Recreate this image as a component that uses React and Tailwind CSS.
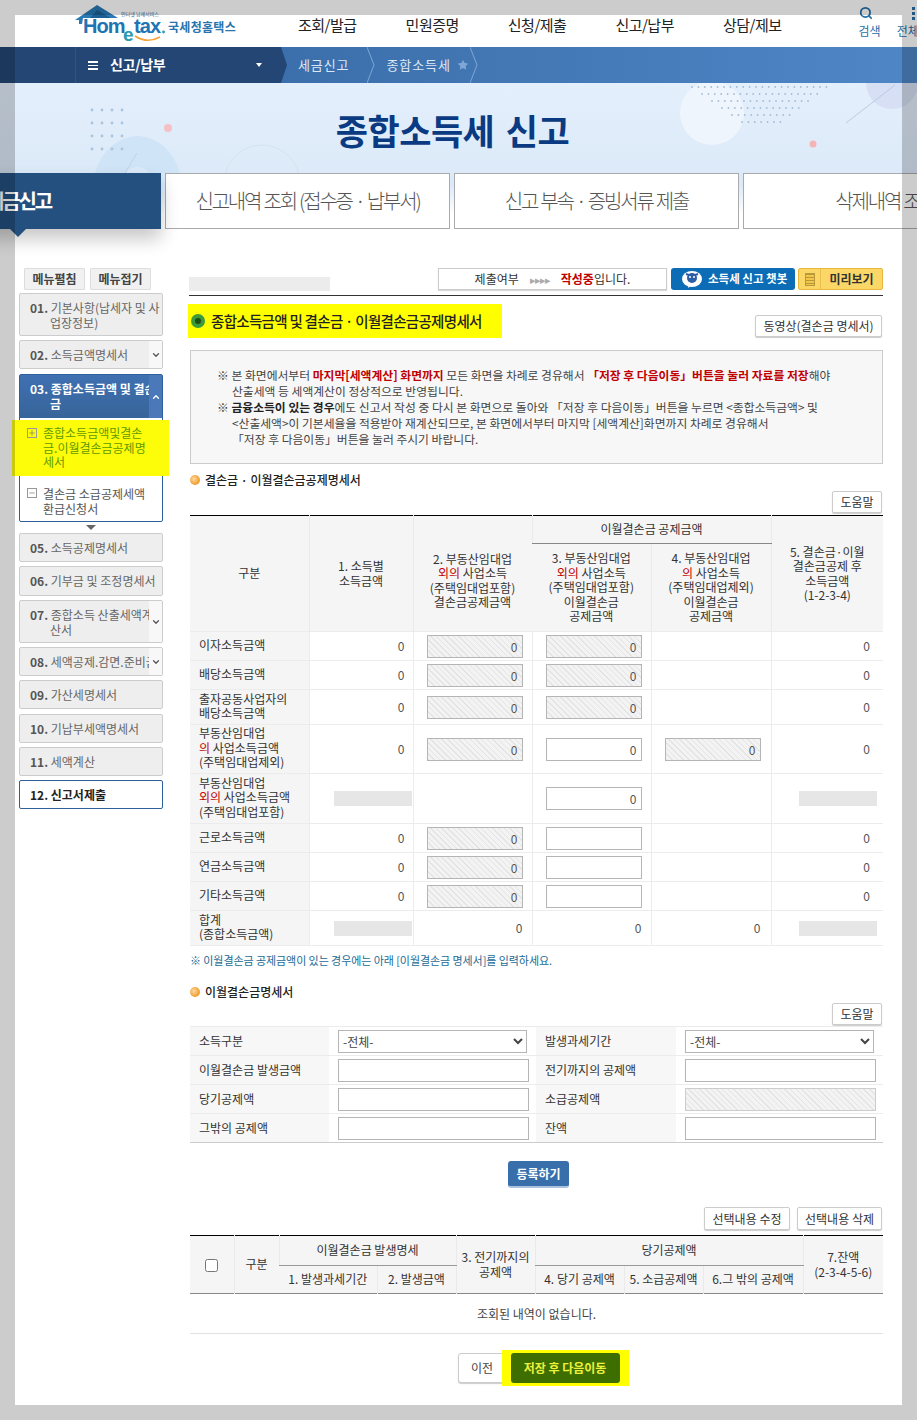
import { ChevronDown, ChevronUp, Search, Star, Plus, Minus } from "lucide-react";

const hatch =
  "bg-[repeating-linear-gradient(45deg,#e4e4e4_0,#e4e4e4_1px,#f3f3f3_1px,#f3f3f3_4px)]";

const Logo = () => (
  <svg width="170" height="47" viewBox="0 0 170 47" className="shrink-0">
    <path d="M0 20 L22 5 L43 18 L34 18 L8 18 L7 24 L4 24 L4 20 Z" fill="#2a7ab5" />
    <path d="M15 18 L22 10 L36 18 Z" fill="#1c5f96" />
    <text x="46" y="15.5" fontSize="5" fill="#2a6a9c" fontFamily="Noto Sans CJK KR">
      인터넷 납세서비스
    </text>
    <text x="8" y="33" fontSize="20" fontWeight="700" fill="#1f74b3" fontFamily="Liberation Sans" letterSpacing="-0.9">
      Hom
    </text>
    <text x="48" y="41" fontSize="19" fill="#2a9ab0" fontFamily="Liberation Sans" fontWeight="700">
      e
    </text>
    <text x="59" y="33" fontSize="20" fontWeight="700" fill="#1f74b3" fontFamily="Liberation Sans" letterSpacing="-0.9">
      tax
    </text>
    <circle cx="88.5" cy="32" r="1.4" fill="#2a9ab0" />
    <path d="M60 36 Q72 44 85 37" stroke="#f2a43a" strokeWidth="1.6" fill="none" />
    <text x="93" y="32" fontSize="12" fontWeight="700" fill="#2a74ad" fontFamily="Noto Sans CJK KR" letterSpacing="0.3">
      국세청홈택스
    </text>
  </svg>
);

const Crumb = () => (
  <svg width="8" height="36" viewBox="0 0 8 36" className="shrink-0">
    <path d="M0 0 L7 18 L0 36" stroke="#7ea6d6" fill="none" />
  </svg>
);

const BannerArt = () => (
  <svg width="917" height="146" viewBox="0 0 917 146" className="absolute top-0 left-0">
    <path d="M95 90 A45 55 0 0 1 180 90 L150 90 A18 22 0 0 0 125 90 Z" fill="#cfe4f6" />
    <circle cx="262" cy="100" r="38" fill="none" stroke="#d5e2f0" />
    <path d="M110 115 L137 70" stroke="#c3d3e6" />
    {[0, 1, 2, 3].flatMap((r) =>
      [0, 1, 2, 3].map((c) => <circle key={`${r}${c}`} cx={92 + c * 10} cy={27 + r * 13} r="1.4" fill="#a9c4df" />)
    )}
    <circle cx="168" cy="45" r="4" fill="#f5c0c5" />
    <circle cx="712" cy="30" r="32" fill="#eef5fc" />
    {[0, 1, 2, 3, 4, 5].flatMap((r) =>
      Array.from({ length: 22 - r * 3 }).map((_, c) => (
        <circle key={`d${r}-${c}`} cx={692 + r * 10 + c * 6.4} cy={4 + r * 7} r="0.9" fill="#a6bcd4" />
      ))
    )}
    <circle cx="813" cy="61" r="3.5" fill="#f5b5b5" />
    <circle cx="892" cy="0" r="26" fill="#d6dff3" />
    <path d="M846 40 L895 2" stroke="#b9cbe2" />
  </svg>
);

const Btn = ({ className = "", children }) => (
  <button className={`border border-[#ccc] bg-white text-[12px] text-[#333] rounded-[2px] shadow-[0_1px_1px_rgba(0,0,0,0.2)] whitespace-nowrap h-[22px] ${className}`}>
    {children}
  </button>
);

const SideItem = ({ lines, active, toggle, h = 29 }) => (
  <div
    className={`w-[144px] flex border rounded-[2px] overflow-hidden shrink-0 ${
      active ? "border-[#2f6099] bg-white" : "border-[#ccc] bg-[#eee]"
    }`}
    style={{ height: h }}
  >
    <div className={`flex-1 min-w-0 overflow-hidden pl-[10px] pt-[6px] text-[12px] leading-[15px] whitespace-nowrap ${active ? "text-[#222]" : "text-[#666]"}`}>
      {lines.map((l, i) =>
        i === 0 ? (
          <div key={i}>
            <b className={active ? "text-[#222]" : "text-[#555]"}>{l[0]}</b> {l[1]}
          </div>
        ) : (
          <div key={i} className="pl-[20px]">{l}</div>
        )
      )}
    </div>
    {toggle && (
      <div className="w-[13px] shrink-0 bg-[#f8f8f8] flex items-center justify-center">
        <ChevronDown size={10} strokeWidth={3} className="text-[#555]" />
      </div>
    )}
  </div>
);

const Sidebar = () => (
  <div className="w-[144px] ml-[19px] shrink-0 flex flex-col">
    <div className="flex gap-[5px] ml-[5px] h-[22px]">
      {["메뉴펼침", "메뉴접기"].map((t) => (
        <button key={t} className="w-[61px] h-[22px] bg-[#f1f1f1] border border-[#ddd] text-[12px] font-bold text-[#444] rounded-[1px]">
          {t}
        </button>
      ))}
    </div>
    <div className="mt-[3px] flex flex-col">
      <SideItem h={43} lines={[["01.", "기본사항(납세자 및 사"], "업장정보)"]} />
      <div className="h-[4px]" />
      <SideItem lines={[["02.", "소득금액명세서"]]} toggle />
      <div className="h-[5px]" />
      <div className="border border-[#2f6099] rounded-[2px] bg-white h-[148px]">
        <div className="h-[43px] flex bg-[linear-gradient(#3f70b2,#376499)]">
          <div className="flex-1 min-w-0 overflow-hidden pl-[10px] pt-[6px] text-[12px] leading-[15px] whitespace-nowrap text-white font-bold">
            <div>03. 종합소득금액 및 결손금</div>
            <div className="pl-[20px]">금</div>
          </div>
          <div className="w-[13px] shrink-0 bg-[#4a78b8] flex items-center justify-center">
            <ChevronUp size={10} strokeWidth={3} className="text-white" />
          </div>
        </div>
        <div className="-ml-[8px] -mr-[7px] mt-[2px] h-[56px] bg-[#fdfd0a] flex gap-[6px] pl-[15px] pt-[6px]">
          <span className="mt-[2px] w-[10px] h-[10px] border border-[#999] flex items-center justify-center shrink-0">
            <Plus size={8} strokeWidth={2} className="text-[#777]" />
          </span>
          <div className="text-[12px] leading-[14.5px] text-[#5f9a00] whitespace-nowrap">
            종합소득금액및결손
            <br />
            금.이월결손금공제명
            <br />
            세서
          </div>
        </div>
        <div className="flex gap-[6px] pl-[7px] pt-[10px]">
          <span className="mt-[2px] w-[10px] h-[10px] border border-[#999] flex items-center justify-center shrink-0">
            <Minus size={8} strokeWidth={2} className="text-[#777]" />
          </span>
          <div className="text-[12px] leading-[15px] text-[#555] whitespace-nowrap">
            결손금 소급공제세액
            <br />
            환급신청서
          </div>
        </div>
      </div>
      <div className="h-[11px] flex items-center justify-center">
        <div className="w-0 h-0 border-x-[5px] border-x-transparent border-t-[5px] border-t-[#666]" />
      </div>
      <div className="flex flex-col gap-[4px]">
        <SideItem lines={[["05.", "소득공제명세서"]]} />
        <SideItem h={30} lines={[["06.", "기부금 및 조정명세서"]]} />
        <SideItem h={43} lines={[["07.", "종합소득 산출세액계"], "산서"]} toggle />
        <SideItem lines={[["08.", "세액공제.감면.준비금"]]} toggle />
        <SideItem lines={[["09.", "가산세명세서"]]} />
        <div className="mt-[1px]">
          <SideItem lines={[["10.", "기납부세액명세서"]]} />
        </div>
        <SideItem lines={[["11.", "세액계산"]]} />
        <div className="w-[144px] h-[29px] border border-[#2f6099] rounded-[2px] bg-white pl-[10px] pt-[6px] text-[12px] leading-[15px] text-[#222] font-bold">
          12. 신고서제출
        </div>
      </div>
    </div>
  </div>
);

const Bullet = () => (
  <span className="w-[10px] h-[10px] rounded-full shrink-0 bg-[radial-gradient(circle_at_40%_40%,#ffd9a0,#ee9a2a_70%)]" />
);

const Num = ({ className = "" }) => <span className={`block leading-[14px] text-[12px] text-[#555] ${className}`}>0</span>;

const Box = ({ type }) => {
  if (type === "h")
    return (
      <input
        readOnly
        value="0"
        className={`block ml-auto w-[96px] h-[23px] border border-[#b5b5b5] text-right pr-[4px] text-[12px] text-[#555] ${hatch}`}
      />
    );
  if (type === "0")
    return <input readOnly value="0" className="block ml-auto w-[96px] h-[23px] border border-[#b5b5b5] bg-white text-right pr-[4px] text-[12px] text-[#555]" />;
  if (type === "e") return <input readOnly className="block ml-auto w-[96px] h-[23px] border border-[#b5b5b5] bg-white" />;
  return null;
};

const Red = ({ children }) => <span className="text-[#c00000]">{children}</span>;

const Blank = () => <div className="w-[78px] h-[15px] bg-[#e6e6e6] ml-auto" />;

const rows = [
  { h: 29, label: "이자소득금액", c: ["h", "h", null] },
  { h: 29, label: "배당소득금액", c: ["h", "h", null] },
  { h: 35, label: <>출자공동사업자의<br />배당소득금액</>, c: ["h", "h", null] },
  { h: 49, label: <>부동산임대업<br /><Red>의</Red> 사업소득금액<br />(주택임대업제외)</>, c: ["h", "0", "h"] },
  { h: 50, label: <>부동산임대업<br /><Red>외의</Red> 사업소득금액<br />(주택임대업포함)</>, c: [null, "0", null], blank: true },
  { h: 29, label: "근로소득금액", c: ["h", "e", null] },
  { h: 29, label: "연금소득금액", c: ["h", "e", null] },
  { h: 29, label: "기타소득금액", c: ["h", "e", null] },
];

const th = "bg-[#f5f5f5] font-normal text-[12px] leading-[14.5px] text-[#333] text-center border-l border-[#eaeaea] first:border-l-0 align-middle p-0";
const td = "border-t border-l border-[#ececec] text-right align-middle p-0 whitespace-nowrap";
const tdLabel = "bg-[#f5f5f5] border-t border-[#ececec] pl-[9px] pb-[2px] text-[12px] leading-[14.5px] text-[#333] text-left align-middle whitespace-nowrap";

const LossTable = () => (
  <table className="w-[693px] ml-[1px] table-fixed border-collapse border-t border-t-black mt-[2px]">
    <colgroup>
      {[119, 104, 119, 119, 120, 112].map((w, i) => (
        <col key={i} style={{ width: w }} />
      ))}
    </colgroup>
    <thead>
      <tr className="h-[28px]">
        <th rowSpan={2} className={th}>구분</th>
        <th rowSpan={2} className={th}>1. 소득별<br />소득금액</th>
        <th rowSpan={2} className={`${th} pt-[14px]`}>2. 부동산임대업<br /><Red>외의</Red> 사업소득<br />(주택임대업포함)<br />결손금공제금액</th>
        <th colSpan={2} className={`${th} border-b border-b-[#888]`}>이월결손금 공제금액</th>
        <th rowSpan={2} className={th}>5. 결손금·이월<br />결손금공제 후<br />소득금액<br />(1-2-3-4)</th>
      </tr>
      <tr className="h-[88px]">
        <th className={th}>3. 부동산임대업<br /><Red>외의</Red> 사업소득<br />(주택임대업포함)<br />이월결손금<br />공제금액</th>
        <th className={th}>4. 부동산임대업<br /><Red>의</Red> 사업소득<br />(주택임대업제외)<br />이월결손금<br />공제금액</th>
      </tr>
    </thead>
    <tbody className="border-t border-t-[#999]">
      {rows.map((r, i) => (
        <tr key={i} style={{ height: r.h }}>
          <td className={tdLabel}>{r.label}</td>
          <td className={`${td} pr-[8px]`}>{r.blank ? <div className="-mr-[7px]"><Blank /></div> : <Num />}</td>
          <td className={`${td} pr-[9px]`}><Box type={r.c[0]} /></td>
          <td className={`${td} pr-[9px]`}><Box type={r.c[1]} /></td>
          <td className={`${td} pr-[10px]`}><Box type={r.c[2]} /></td>
          <td className={`${td} pr-[13px]`}>{r.blank ? <div className="-mr-[7px]"><Blank /></div> : <Num />}</td>
        </tr>
      ))}
      <tr className="h-[35px] border-b border-b-[#ececec]">
        <td className={tdLabel}>합계<br />(종합소득금액)</td>
        <td className={`${td} pr-[1px]`}><Blank /></td>
        <td className={`${td} pr-[9px]`}><Num /></td>
        <td className={`${td} pr-[9px]`}><Num /></td>
        <td className={`${td} pr-[10px]`}><Num /></td>
        <td className={`${td} pr-[6px]`}><Blank /></td>
      </tr>
    </tbody>
  </table>
);

const fieldLabel = "bg-[#f7f7f7] border-t border-[#ececec] pl-[9px] text-[12px] text-[#333] align-middle";
const fieldCell = "border-t border-[#ececec] align-middle pl-[9px]";
const plain = "block w-[191px] h-[23px] border border-[#b5b5b5] bg-white";

const FormTable = () => (
  <table className="w-[693px] ml-[1px] table-fixed border-collapse border-t border-t-[#bbb] border-b border-b-[#ccc] mt-[1px]">
    <colgroup>
      {[139, 207, 140, 207].map((w, i) => (
        <col key={i} style={{ width: w }} />
      ))}
    </colgroup>
    <tbody>
      <tr className="h-[29px]">
        <td className={fieldLabel}>소득구분</td>
        <td className={fieldCell}>
          <select className="block w-[189px] h-[23px] border border-[#b5b5b5] bg-white text-[12px] text-[#444]"><option>-전체-</option></select>
        </td>
        <td className={fieldLabel}>발생과세기간</td>
        <td className={fieldCell}>
          <select className="block w-[189px] h-[23px] border border-[#b5b5b5] bg-white text-[12px] text-[#444]"><option>-전체-</option></select>
        </td>
      </tr>
      <tr className="h-[29px]">
        <td className={fieldLabel}>이월결손금 발생금액</td>
        <td className={fieldCell}><input readOnly className={plain} /></td>
        <td className={fieldLabel}>전기까지의 공제액</td>
        <td className={fieldCell}><input readOnly className={plain} /></td>
      </tr>
      <tr className="h-[29px]">
        <td className={fieldLabel}>당기공제액</td>
        <td className={fieldCell}><input readOnly className={plain} /></td>
        <td className={fieldLabel}>소급공제액</td>
        <td className={fieldCell}><input readOnly className={`block w-[191px] h-[23px] border border-[#ccc] ${hatch}`} /></td>
      </tr>
      <tr className="h-[29px]">
        <td className={fieldLabel}>그밖의 공제액</td>
        <td className={fieldCell}><input readOnly className={plain} /></td>
        <td className={fieldLabel}>잔액</td>
        <td className={fieldCell}><input readOnly className={plain} /></td>
      </tr>
    </tbody>
  </table>
);

const ListTable = () => (
  <table className="w-[693px] ml-[1px] table-fixed border-collapse border-t border-t-black mt-[5px]">
    <colgroup>
      {[44, 45, 98, 79, 79, 89, 79, 100, 80].map((w, i) => (
        <col key={i} style={{ width: w }} />
      ))}
    </colgroup>
    <thead className="border-b border-b-[#888]">
      <tr className="h-[30px]">
        <th rowSpan={2} className={th}><input type="checkbox" className="align-middle w-[13px] h-[13px]" /></th>
        <th rowSpan={2} className={th}>구분</th>
        <th colSpan={2} className={`${th} border-b border-b-[#999]`}>이월결손금 발생명세</th>
        <th rowSpan={2} className={th}>3. 전기까지의<br />공제액</th>
        <th colSpan={3} className={`${th} border-b border-b-[#999]`}>당기공제액</th>
        <th rowSpan={2} className={th}>7.잔액<br />(2-3-4-5-6)</th>
      </tr>
      <tr className="h-[28px]">
        <th className={th}>1. 발생과세기간</th>
        <th className={th}>2. 발생금액</th>
        <th className={th}>4. 당기 공제액</th>
        <th className={th}>5. 소급공제액</th>
        <th className={th}>6.그 밖의 공제액</th>
      </tr>
    </thead>
    <tbody>
      <tr className="h-[40px] border-b border-b-[#e2e2e2]">
        <td colSpan={9} className="text-center text-[12px] text-[#444] align-middle">조회된 내역이 없습니다.</td>
      </tr>
    </tbody>
  </table>
);

const Main = () => (
  <div className="w-[694px] ml-[26px] shrink-0 flex flex-col">
    <div className="h-[28px] border-b border-b-[#333] flex items-start">
      <div className="w-[141px] h-[14px] mt-[9px] bg-[#ececec]" />
      <div className="ml-auto flex gap-[4px]">
        <div className="w-[229px] h-[22px] border border-[#ccc] bg-white shadow-[0_1px_1px_rgba(0,0,0,0.15)] flex items-center justify-center gap-[11px] text-[12px] text-[#333]">
          <span>제출여부</span>
          <span className="text-[#aaa] text-[11px] tracking-[-1px]">▸▸▸▸</span>
          <span><span className="text-[#c00000] font-bold">작성중</span>입니다.</span>
        </div>
        <div className="flex gap-[3px]">
          <div className="w-[124px] h-[22px] rounded-[3px] bg-[#0c6cb5] flex items-center gap-[5px] pl-[10px] text-[11.5px] font-bold text-white whitespace-nowrap">
            <svg width="22" height="18" viewBox="0 0 22 18" className="shrink-0">
              <ellipse cx="11" cy="9" rx="10" ry="8" fill="#fff" />
              <path d="M11 15 L7 18 L8 13 Z" fill="#fff" />
              <circle cx="11" cy="8" r="5" fill="#2a5fa5" />
              <circle cx="9" cy="7" r="1" fill="#fff" />
              <circle cx="13" cy="7" r="1" fill="#fff" />
              <path d="M5 4 L8 5 M17 4 L14 5" stroke="#2a5fa5" strokeWidth="2" />
            </svg>
            소득세 신고 챗봇
          </div>
          <div className="w-[85px] h-[22px] rounded-[2px] border border-[#e5b93e] bg-[#fbd767] flex items-center text-[12px] font-bold text-[#333]">
            <span className="w-[22px] h-full flex items-center justify-center border-r border-[#e8c04f]">
              <span className="w-[10px] h-[13px] bg-[repeating-linear-gradient(#b99a3a_0,#b99a3a_1px,#f3c64a_1px,#f3c64a_3px)] border border-[#b99a3a]" />
            </span>
            <span className="flex-1 text-center">미리보기</span>
          </div>
        </div>
      </div>
    </div>
    <div className="flex justify-between items-end mt-[8px] h-[34px]">
      <div className="w-[314px] h-[34px] -ml-[1px] bg-[#ffff00] flex items-center gap-[7px] pl-[2px]">
        <span className="w-[14px] h-[14px] ml-[1px] rounded-full bg-[#3c9a3c] flex items-center justify-center shrink-0">
          <span className="w-[6px] h-[6px] rounded-full bg-[#1d4d12]" />
        </span>
        <span className="-ml-[1px] text-[14.5px] font-medium text-[#222] whitespace-nowrap tracking-[-0.7px]">종합소득금액 및 결손금 · 이월결손금공제명세서</span>
      </div>
      <Btn className="w-[127px] mr-[1px] mb-[1px]">동영상(결손금 명세서)</Btn>
    </div>
    <div className="ml-[1px] mt-[12px] h-[114px] border border-[#ccc] bg-[#f7f7f7] pl-[26px] pt-[16px] text-[11.8px] leading-[16px] text-[#444] whitespace-nowrap">
      <div>※ 본 화면에서부터 <b className="text-[#c00000]">마지막[세액계산] 화면까지</b> 모든 화면을 차례로 경유해서 <b className="text-[#c00000]">「저장 후 다음이동」버튼을 눌러 자료를 저장</b>해야</div>
      <div className="pl-[15px]">산출세액 등 세액계산이 정상적으로 반영됩니다.</div>
      <div>※ <b className="text-[#222]">금융소득이 있는 경우</b>에도 신고서 작성 중 다시 본 화면으로 돌아와 「저장 후 다음이동」버튼을 누르면 &lt;종합소득금액&gt; 및</div>
      <div className="pl-[15px]">&lt;산출세액&gt;이 기본세율을 적용받아 재계산되므로, 본 화면에서부터 마지막 [세액계산]화면까지 차례로 경유해서</div>
      <div className="pl-[15px]">「저장 후 다음이동」버튼을 눌러 주시기 바랍니다.</div>
    </div>
    <div className="mt-[8px] h-[16px] flex items-center gap-[5px] ml-[1px] text-[12px] font-medium text-[#222]">
      <Bullet />
      결손금 · 이월결손금공제명세서
    </div>
    <div className="mt-[3px] flex justify-end mr-[1px]"><Btn className="w-[50px]">도움말</Btn></div>
    <LossTable />
    <div className="mt-[6px] ml-[1px] h-[16px] text-[11px] leading-[16px] tracking-[-0.07px] text-[#1a6a95]">
      ※ 이월결손금 공제금액이 있는 경우에는 아래 [이월결손금 명세서]를 입력하세요.
    </div>
    <div className="mt-[16px] h-[16px] flex items-center gap-[5px] ml-[1px] text-[12px] font-medium text-[#222]">
      <Bullet />
      이월결손금명세서
    </div>
    <div className="mt-[3px] flex justify-end mr-[1px]"><Btn className="w-[50px]">도움말</Btn></div>
    <FormTable />
    <div className="mt-[18px] flex justify-center">
      <button className="w-[61px] h-[27px] ml-[5px] rounded-[3px] bg-[#386fab] border-b-2 border-[#a9c3df] text-[12px] font-bold text-white">등록하기</button>
    </div>
    <div className="mt-[19px] flex justify-end gap-[7px] mr-[1px]">
      <Btn className="w-[86px] h-[23px]">선택내용 수정</Btn>
      <Btn className="w-[85px] h-[23px]">선택내용 삭제</Btn>
    </div>
    <ListTable />
    <div className="mt-[16px] flex justify-center items-center ml-[15px]">
      <button className="w-[48px] h-[30px] -mr-[4px] border border-[#ccc] rounded-[3px] bg-white text-[12px] text-[#444] shadow-[0_1px_1px_rgba(0,0,0,0.2)]">이전</button>
      <div className="w-[127px] h-[36px] bg-[#ffff00] flex items-center justify-center">
        <button className="w-[109px] h-[30px] rounded-[3px] ml-[-1px] bg-[#3e6d00] text-[12px] font-bold text-[#ecf23c]">저장 후 다음이동</button>
      </div>
    </div>
  </div>
);

export default function App() {
  return (
    <div className="relative w-[917px] h-[1420px] overflow-hidden bg-white font-['Noto_Sans_CJK_KR','Noto_Sans',sans-serif]">
      <header className="h-[47px] flex">
        <div className="ml-[75px]"><Logo /></div>
        <nav className="ml-[53px] mt-[15px] h-[20px] flex gap-[49px] text-[15px] leading-[20px] tracking-[-0.5px] text-[#222] whitespace-nowrap">
          <span>조회/발급</span>
          <span>민원증명</span>
          <span>신청/제출</span>
          <span>신고/납부</span>
          <span>상담/제보</span>
        </nav>
        <div className="ml-[77px] mt-[6px] flex flex-col items-start text-[12px] leading-[14px] text-[#1f6ea8] whitespace-nowrap">
          <Search size={14} strokeWidth={3} />
          <span className="mt-[4px]">검색</span>
        </div>
        <div className="ml-[16px] mt-[6px] flex flex-col items-start text-[12px] leading-[14px] text-[#1f6ea8] whitespace-nowrap">
          <div className="ml-[15px] grid grid-cols-2 gap-[2px] w-[8px] h-[14px] content-center">
            {[0, 1, 2, 3, 4, 5].map((i) => <span key={i} className="w-[3px] h-[3px] bg-[#2a6ea5]" />)}
          </div>
          <span className="mt-[4px]">전체</span>
        </div>
      </header>

      <div className="h-[36px] flex items-center bg-[linear-gradient(90deg,#33659f,#4f86c6)] text-white">
        <div className="w-[289px] h-full shrink-0 flex items-center bg-[#234674] [clip-path:polygon(0_0,281px_0,287px_50%,281px_100%,0_100%)]">
          <div className="ml-[75px] h-full border-l border-[#2f5585]" />
          <span className="ml-[12px] w-[10px] h-[9px] border-y-2 border-white flex items-center">
            <span className="w-full h-[1px] bg-white" />
          </span>
          <span className="ml-[12px] pb-[2px] text-[14px] font-bold tracking-[-0.3px]">신고/납부</span>
          <span className="ml-[91px] w-0 h-0 border-x-[3px] border-x-transparent border-t-[4px] border-t-white" />
        </div>
        <span className="ml-[9px] pb-[1px] text-[13px] tracking-[0.9px] text-[#dce8f5] whitespace-nowrap">세금신고</span>
        <div className="ml-[18px]"><Crumb /></div>
        <span className="ml-[11px] pb-[1px] text-[13px] tracking-[0.9px] text-[#dce8f5] whitespace-nowrap">종합소득세</span>
        <Star size={12} fill="#7ea6d6" strokeWidth={0} className="ml-[6px]" />
        <div className="ml-[1px]"><Crumb /></div>
      </div>

      <div className="relative h-[146px] bg-[linear-gradient(#e4effc,#dbe9f8_70%,#fff_90%)]">
        <BannerArt />
        <h1 className="relative h-[90px] pt-[22px] pr-[12px] text-center text-[35px] leading-[50px] font-bold text-[#0a3a82] tracking-[-0.5px] [word-spacing:4px]">
          종합소득세 신고
        </h1>
        <div className="relative -ml-[124px] flex gap-[4px] h-[56px] whitespace-nowrap text-[20px] tracking-[-2.2px] [word-spacing:1px] font-light text-[#555]">
          <div className="relative w-[285px] shrink-0 bg-[#24507f] text-white font-bold flex items-center justify-center shadow-[0_10px_18px_rgba(0,0,0,0.22)]">
            세금신고
            <span className="absolute left-[134px] top-[56px] w-0 h-0 border-x-[8px] border-x-transparent border-t-[8px] border-t-[#24507f]" />
          </div>
          <div className="w-[285px] shrink-0 bg-white border border-[#aaa] flex items-center justify-center">신고내역 조회 (접수증 · 납부서)</div>
          <div className="w-[285px] shrink-0 bg-white border border-[#aaa] flex items-center justify-center">신고 부속 · 증빙서류 제출</div>
          <div className="w-[285px] shrink-0 bg-white border border-[#aaa] flex items-center justify-center">삭제내역 조회</div>
        </div>
      </div>

      <div className="flex pt-[39px]">
        <Sidebar />
        <Main />
      </div>

      <div className="absolute inset-0 border-[15px] border-black/20 pointer-events-none" />
    </div>
  );
}
